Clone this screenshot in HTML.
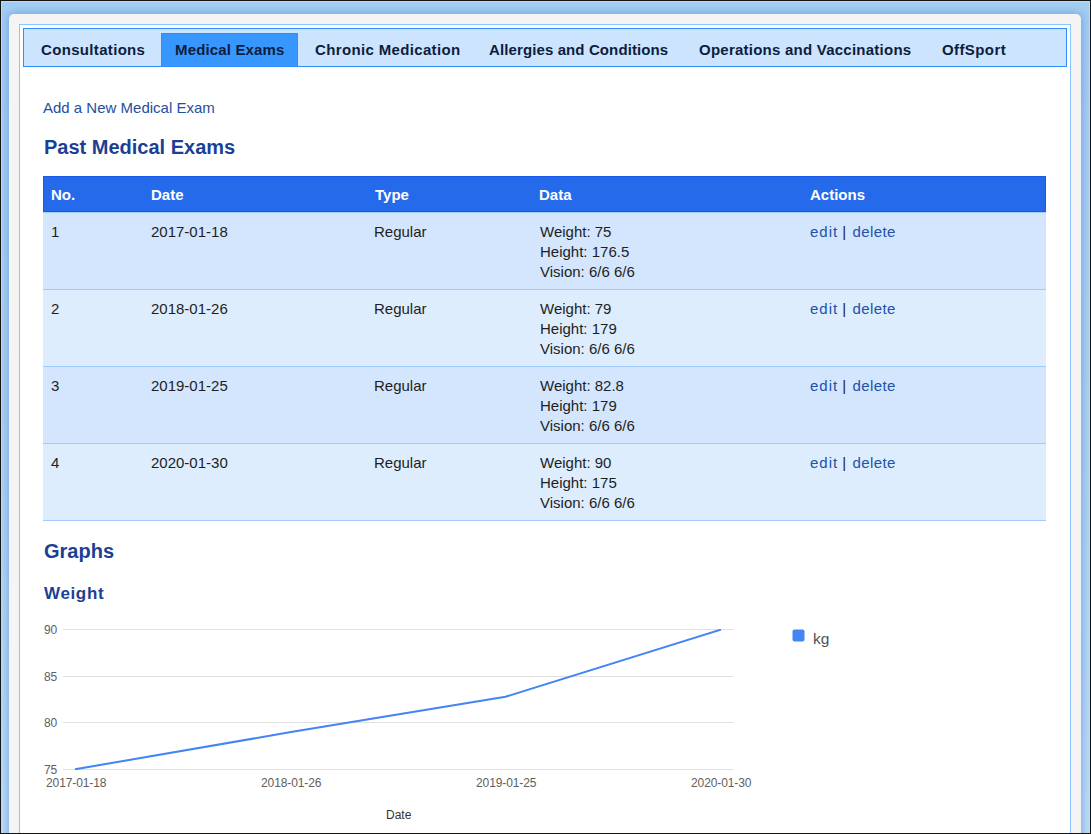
<!DOCTYPE html>
<html><head><meta charset="utf-8">
<style>
html,body{margin:0;padding:0;}
body{width:1091px;height:834px;overflow:hidden;position:relative;background:#151210;font-family:"Liberation Sans",sans-serif;}
.abs{position:absolute;white-space:nowrap;}
#frame{position:absolute;left:1px;top:1px;width:1089px;height:832px;background:linear-gradient(180deg,#a4cdf1 0%,#acd1f2 50%,#bcdcf8 100%);box-shadow:inset 1px 1px 0 #b6dcfb, inset -1px 0 0 #b6dcfb;}
#grey{position:absolute;left:9px;top:14px;width:1072px;height:830px;background:#f4f4f4;border-radius:5px 5px 0 0;box-shadow:0 0 9px 1px rgba(100,150,220,0.75);}
#panel{position:absolute;left:19px;top:24px;width:1050px;height:830px;background:#fff;border:1px solid #8cc4ff;}
#tabs{position:absolute;left:23px;top:28px;width:1042px;height:37px;background:#cce4fd;border:1px solid #2e8dff;}
#activetab{position:absolute;left:161px;top:33px;width:135px;height:32px;background:#3797ff;border:1px solid #2a90ff;border-bottom:0;}
.tab{position:absolute;top:40px;font-size:15px;font-weight:bold;color:#0d1d3d;line-height:20px;}
.link{color:#24509e;}
h1x{display:block}
.h2{position:absolute;font-size:20px;font-weight:bold;color:#1c3f94;line-height:24px;}
table.t{position:absolute;left:43px;top:176px;width:1003px;border-collapse:separate;border-spacing:0;font-size:15px;line-height:20px;table-layout:fixed;}
table.t th{background:#246aeb;color:#fff;text-align:left;font-weight:bold;padding:8px 8px 6px 8px;height:20px;border-top:1px solid #1a5ae6;border-bottom:1px solid #1a5ae6;}
table.t th:first-child{border-left:1px solid #1a5ae6;padding-left:7px}
table.t th:nth-child(3){padding-left:9px;padding-right:7px}
table.t th:last-child{border-right:1px solid #1a5ae6;}
table.t td{padding:9px 8px 7px 8px;vertical-align:top;color:#1e1e1e;border-bottom:1px solid #a0ccfc;height:60px;}
table.t td:nth-child(4){padding-left:9px;padding-right:7px}
table.t tr.first td{border-top:1px solid #a6d0fb;}
table.t tr.o td{background:#d3e6fd;}
table.t tr.e td{background:#ddedfd;}
table.t td a{color:#2152a8;text-decoration:none;}
.ed{letter-spacing:1px}.de{letter-spacing:0.4px;margin-left:2px}
.ax{position:absolute;font-size:12px;color:#606060;line-height:14px;letter-spacing:-0.1px;}
</style></head><body>
<div id="frame"></div>
<div id="grey"></div>
<div id="panel"></div>
<div id="tabs"></div>
<div id="activetab"></div>
<div class="tab abs" style="left:41px;letter-spacing:0.33px">Consultations</div>
<div class="tab abs" style="left:175px;letter-spacing:0.15px">Medical Exams</div>
<div class="tab abs" style="left:315px;letter-spacing:0.35px">Chronic Medication</div>
<div class="tab abs" style="left:489px;letter-spacing:0.11px">Allergies and Conditions</div>
<div class="tab abs" style="left:699px;letter-spacing:0.24px">Operations and Vaccinations</div>
<div class="tab abs" style="left:942px;letter-spacing:0.4px">OffSport</div>

<div class="abs link" style="left:43px;top:98px;font-size:15px;line-height:20px;">Add a New Medical Exam</div>
<div class="h2 abs" style="left:44px;top:135px;">Past Medical Exams</div>

<table class="t">
<colgroup><col style="width:100px"><col style="width:223px"><col style="width:165px"><col style="width:271px"><col style="width:244px"></colgroup>
<tr><th>No.</th><th>Date</th><th>Type</th><th>Data</th><th>Actions</th></tr>
<tr class="o first"><td>1</td><td>2017-01-18</td><td>Regular</td><td>Weight: 75<br>Height: 176.5<br>Vision: 6/6 6/6</td><td><a class="ed">edit</a> | <a class="de">delete</a></td></tr>
<tr class="e"><td>2</td><td>2018-01-26</td><td>Regular</td><td>Weight: 79<br>Height: 179<br>Vision: 6/6 6/6</td><td><a class="ed">edit</a> | <a class="de">delete</a></td></tr>
<tr class="o"><td>3</td><td>2019-01-25</td><td>Regular</td><td>Weight: 82.8<br>Height: 179<br>Vision: 6/6 6/6</td><td><a class="ed">edit</a> | <a class="de">delete</a></td></tr>
<tr class="e"><td>4</td><td>2020-01-30</td><td>Regular</td><td>Weight: 90<br>Height: 175<br>Vision: 6/6 6/6</td><td><a class="ed">edit</a> | <a class="de">delete</a></td></tr>
</table>

<div class="h2 abs" style="left:44px;top:539px;">Graphs</div>
<div class="abs" style="left:44px;top:584px;font-size:17px;font-weight:bold;color:#1c3f94;line-height:20px;letter-spacing:0.65px;">Weight</div>

<svg class="abs" style="left:0;top:0" width="1091" height="834">
 <g stroke="#e0e0e0" stroke-width="1">
  <line x1="63" y1="629.5" x2="733.5" y2="629.5"/>
  <line x1="63" y1="676.5" x2="733.5" y2="676.5"/>
  <line x1="63" y1="722.5" x2="733.5" y2="722.5"/>
  <line x1="63" y1="769.5" x2="733.5" y2="769.5"/>
 </g>
 <defs><clipPath id="ca"><rect x="63" y="629" width="671" height="141"/></clipPath></defs>
 <polyline clip-path="url(#ca)" fill="none" stroke="#4285f4" stroke-width="2" points="75,769.3 291,732.1 505.5,696.8 721,629.6"/>
 <rect x="792.5" y="629.5" width="12" height="12" rx="2" fill="#4285f4"/>
</svg>
<div class="ax" style="left:44px;top:623px">90</div>
<div class="ax" style="left:44px;top:670px">85</div>
<div class="ax" style="left:44px;top:716px">80</div>
<div class="ax" style="left:44px;top:763px">75</div>
<div class="ax" style="left:46px;top:776px">2017-01-18</div>
<div class="ax" style="left:261px;top:776px">2018-01-26</div>
<div class="ax" style="left:476px;top:776px">2019-01-25</div>
<div class="ax" style="left:691px;top:776px">2020-01-30</div>
<div class="ax" style="left:386px;top:808px;color:#333;letter-spacing:0">Date</div>
<div class="abs" style="left:813px;top:630.5px;font-size:15.5px;color:#505050;line-height:16px">kg</div>
<div class="abs" style="left:0;top:833px;width:1091px;height:1px;background:#151210"></div>
<div class="abs" style="left:1090px;top:0;width:1px;height:834px;background:#151210"></div>
</body></html>
